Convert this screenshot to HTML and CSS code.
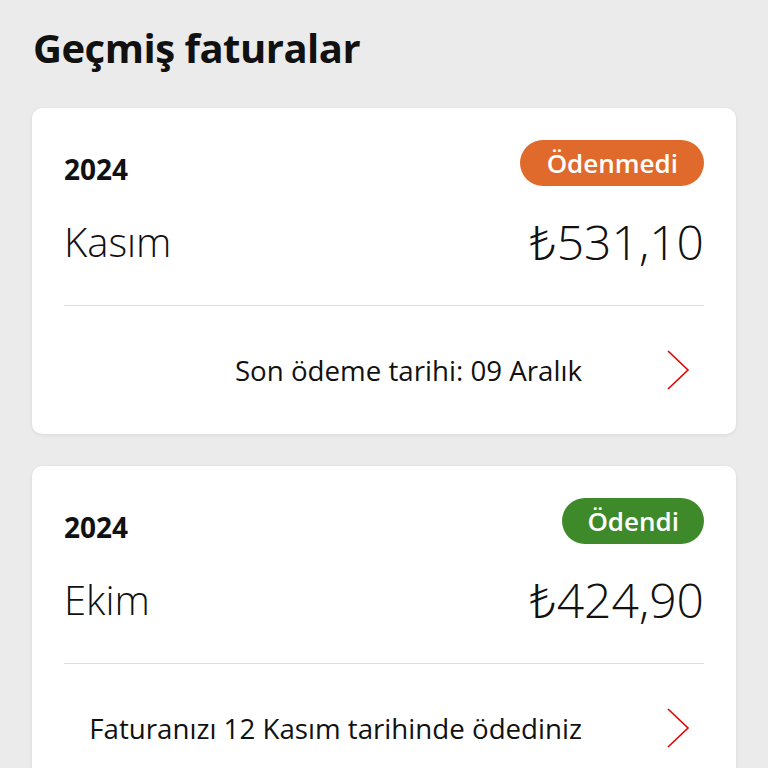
FILE: index.html
```html
<!DOCTYPE html>
<html lang="tr">

<head>
    <meta charset="UTF-8">
    <meta name="viewport" content="width=device-width, initial-scale=1.0">
    <title>Geçmiş faturalar</title>
    <link rel="stylesheet" href="styles.css">
</head>

<body>
    <h1 class="page-title">Geçmiş faturalar</h1>

    <div class="bill-list">
        <div class="bill-card">
            <div class="bill-top">
                <div class="bill-row">
                    <span class="bill-year">2024</span>
                    <span class="badge badge-unpaid">Ödenmedi</span>
                </div>
                <div class="bill-row">
                    <span class="bill-month">Kasım</span>
                    <span class="bill-amount">₺531,10</span>
                </div>
            </div>
            <div class="bill-footer">
                <span class="bill-note">Son ödeme tarihi: 09 Aralık</span>
                <svg class="chevron" viewBox="0 0 24 40" width="24" height="40">
                    <path d="M2 1 L22 20 L2 39" fill="none" stroke="#e60000" stroke-width="1.6" />
                </svg>
            </div>
        </div>

        <div class="bill-card">
            <div class="bill-top">
                <div class="bill-row">
                    <span class="bill-year">2024</span>
                    <span class="badge badge-paid">Ödendi</span>
                </div>
                <div class="bill-row">
                    <span class="bill-month">Ekim</span>
                    <span class="bill-amount">₺424,90</span>
                </div>
            </div>
            <div class="bill-footer">
                <span class="bill-note">Faturanızı 12 Kasım tarihinde ödediniz</span>
                <svg class="chevron" viewBox="0 0 24 40" width="24" height="40">
                    <path d="M2 1 L22 20 L2 39" fill="none" stroke="#e60000" stroke-width="1.6" />
                </svg>
            </div>
        </div>
    </div>
</body>

</html>
```

FILE: styles.css
```css
* {
    margin: 0;
    box-sizing: border-box;
    font-family: 'Open Sans', 'Noto Sans', sans-serif;
}

body {
    background-color: #ebebeb;
    color: #111111;
    padding: 22px 32px 0 32px;
}

.page-title {
    font-size: 40px;
    font-weight: 700;
    letter-spacing: -0.5px;
    line-height: 52px;
    padding-left: 1px;
    margin-bottom: 34px;
}

.bill-list {
    display: flex;
    flex-direction: column;
    gap: 32px;
}

.bill-card {
    background-color: #ffffff;
    border-radius: 10px;
    box-shadow: 0 1px 4px rgba(0, 0, 0, 0.08);
    padding: 0 32px;
}

.bill-top {
    padding: 32px 0 35px 0;
    border-bottom: 1px solid #dcdcdc;
    display: flex;
    flex-direction: column;
    gap: 28px;
}

.bill-row {
    display: flex;
    justify-content: space-between;
    align-items: center;
}

.bill-year {
    font-size: 28px;
    font-weight: 700;
    line-height: 28px;
    align-self: flex-end;
    margin-bottom: 3px;
}

.badge {
    height: 46px;
    border-radius: 23px;
    padding: 0 26px 0 27px;
    color: #ffffff;
    font-size: 26px;
    font-weight: 600;
    display: flex;
    align-items: center;
}

.badge-unpaid {
    background-color: #e06a2b;
}

.badge-paid {
    background-color: #3e8a2b;
    padding: 0 25px;
}

.bill-month {
    font-size: 40px;
    font-weight: 300;
    line-height: 56px;
}

.bill-amount {
    font-size: 48px;
    font-weight: 300;
    line-height: 56px;
}

.bill-footer {
    height: 128px;
    display: flex;
    justify-content: flex-end;
    align-items: center;
    gap: 84px;
    padding-right: 14px;
}

.bill-note {
    font-size: 27.7px;
}

.chevron {
    display: block;
}
```
